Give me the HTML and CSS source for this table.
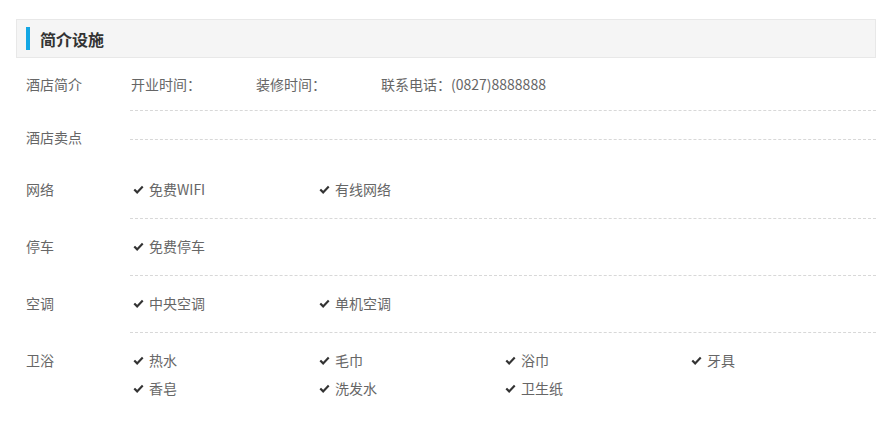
FILE: index.html
```html
<!DOCTYPE html>
<html lang="zh">
<head>
<meta charset="utf-8">
<link rel="stylesheet" href="styles.css">
</head>
<body>
<div class="wrap">
  <div class="head"><span class="bar"></span><h2 class="title">简介设施</h2></div>

  <div class="row">
    <div class="label">酒店简介</div>
    <div class="content info">
      <span class="cell">开业时间：</span>
      <span class="cell">装修时间：</span>
      <span class="cell">联系电话：(0827)8888888</span>
    </div>
  </div>

  <div class="row">
    <div class="label">酒店卖点</div>
    <div class="content empty"></div>
  </div>

  <div class="row">
    <div class="label tall">网络</div>
    <div class="content list">
      <span class="item"><svg class="chk" viewBox="0 0 12 10"><polyline points="1.3,5 4.5,8.2 10.7,1.8"/></svg>免费WIFI</span>
      <span class="item"><svg class="chk" viewBox="0 0 12 10"><polyline points="1.3,5 4.5,8.2 10.7,1.8"/></svg>有线网络</span>
    </div>
  </div>

  <div class="row">
    <div class="label tall">停车</div>
    <div class="content list">
      <span class="item"><svg class="chk" viewBox="0 0 12 10"><polyline points="1.3,5 4.5,8.2 10.7,1.8"/></svg>免费停车</span>
    </div>
  </div>

  <div class="row">
    <div class="label tall">空调</div>
    <div class="content list">
      <span class="item"><svg class="chk" viewBox="0 0 12 10"><polyline points="1.3,5 4.5,8.2 10.7,1.8"/></svg>中央空调</span>
      <span class="item"><svg class="chk" viewBox="0 0 12 10"><polyline points="1.3,5 4.5,8.2 10.7,1.8"/></svg>单机空调</span>
    </div>
  </div>

  <div class="row">
    <div class="label tall">卫浴</div>
    <div class="content list last">
      <span class="item"><svg class="chk" viewBox="0 0 12 10"><polyline points="1.3,5 4.5,8.2 10.7,1.8"/></svg>热水</span>
      <span class="item"><svg class="chk" viewBox="0 0 12 10"><polyline points="1.3,5 4.5,8.2 10.7,1.8"/></svg>毛巾</span>
      <span class="item"><svg class="chk" viewBox="0 0 12 10"><polyline points="1.3,5 4.5,8.2 10.7,1.8"/></svg>浴巾</span>
      <span class="item"><svg class="chk" viewBox="0 0 12 10"><polyline points="1.3,5 4.5,8.2 10.7,1.8"/></svg>牙具</span>
      <span class="item"><svg class="chk" viewBox="0 0 12 10"><polyline points="1.3,5 4.5,8.2 10.7,1.8"/></svg>香皂</span>
      <span class="item"><svg class="chk" viewBox="0 0 12 10"><polyline points="1.3,5 4.5,8.2 10.7,1.8"/></svg>洗发水</span>
      <span class="item"><svg class="chk" viewBox="0 0 12 10"><polyline points="1.3,5 4.5,8.2 10.7,1.8"/></svg>卫生纸</span>
    </div>
  </div>
</div>
</body>
</html>
```

FILE: styles.css
```css
* { box-sizing: border-box; }
body {
  margin: 0;
  background: #fff;
  font-family: "Noto Sans CJK SC", "Microsoft YaHei", sans-serif;
  font-size: 14px;
  color: #666;
}
.wrap {
  width: 860px;
  margin: 19px 0 0 16px;
}
.head {
  height: 39px;
  border: 1px solid #e8e8e8;
  background: #f5f5f5;
  display: flex;
  align-items: center;
}
.bar {
  width: 4px;
  height: 23px;
  margin-left: 9px;
  margin-right: 10px;
  background: #14a7e4;
}
.title {
  margin: 0;
  font-size: 16px;
  font-weight: bold;
  color: #333;
  line-height: 20px;
}
.row {
  display: flex;
  align-items: flex-start;
}
.label {
  width: 114px;
  flex: none;
  padding: 15px 0 14px 10px;
  line-height: 22px;
  color: #666;
}
.label.tall {
  line-height: 28px;
  padding-top: 13px;
  padding-bottom: 15px;
}
.content {
  flex: 1;
  padding-left: 1px;
  border-bottom: 1px dashed #d8d8d8;
}
.info {
  display: flex;
  padding-top: 15px;
  padding-bottom: 15px;
  line-height: 22px;
}
.cell {
  width: 125px;
  white-space: nowrap;
}
.empty {
  height: 29px;
}
.list {
  display: flex;
  flex-wrap: wrap;
  padding-top: 13px;
  padding-bottom: 15px;
}
.list.last {
  border-bottom: none;
}
.item {
  width: 186px;
  line-height: 28px;
  display: flex;
  align-items: center;
  padding-left: 2px;
}
.chk {
  width: 11px;
  height: 9px;
  margin-right: 5px;
  fill: none;
  stroke: #333;
  stroke-width: 2.4;
}
```
